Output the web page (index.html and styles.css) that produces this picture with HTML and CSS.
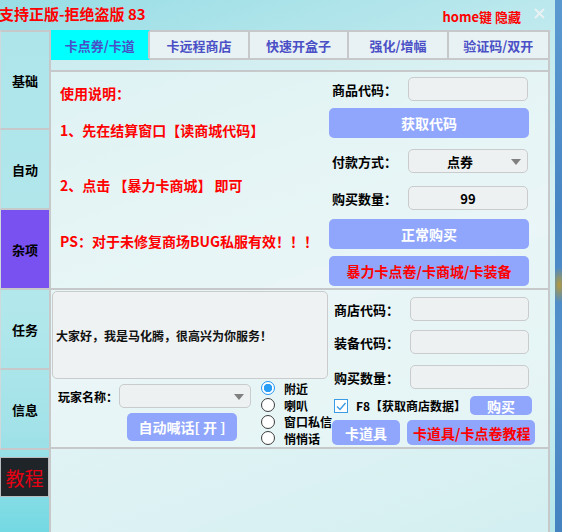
FILE: index.html
```html
<!DOCTYPE html>
<html lang="zh">
<head>
    <meta charset="UTF-8">
    <title>支持正版-拒绝盗版</title>
    <link rel="stylesheet" href="styles.css">
</head>
<body>
<div class="win">
    <div class="titlebar">
        <span class="title">支持正版-拒绝盗版 83</span>
        <span class="hide-tip">home键 隐藏</span>
        <span class="close">
            <svg width="11" height="11" viewBox="0 0 11 11"><path d="M1 1L10 10M10 1L1 10" stroke="#e9f1f3" stroke-width="2"/></svg>
        </span>
    </div>
    <div class="main">
        <div class="side">
            <div class="side-item first">基础</div>
            <div class="side-item">自动</div>
            <div class="side-item active">杂项</div>
            <div class="side-item">任务</div>
            <div class="side-item">信息</div>
            <div class="side-course">教程</div>
        </div>
        <div class="content">
            <div class="tabs">
                <div class="tab active">卡点券/卡道</div>
                <div class="tab">卡远程商店</div>
                <div class="tab">快速开盒子</div>
                <div class="tab">强化/增幅</div>
                <div class="tab last">验证码/双开</div>
            </div>

            <!-- 上半部分 -->
            <div class="panel upper">
                <div class="notes">
                    <p class="note head">使用说明：</p>
                    <p class="note step1">1、先在结算窗口【读商城代码】</p>
                    <p class="note step2">2、点击 【暴力卡商城】 即可</p>
                    <p class="note ps">PS：对于未修复商场BUG私服有效！！！</p>
                </div>
                <div class="form">
                    <div class="row r1">
                        <span class="label">商品代码：</span>
                        <div class="input"></div>
                    </div>
                    <div class="btn big b1">获取代码</div>
                    <div class="row r2">
                        <span class="label">付款方式：</span>
                        <div class="input select"><span class="val">点券</span><span class="arrow"></span></div>
                    </div>
                    <div class="row r3">
                        <span class="label">购买数量：</span>
                        <div class="input num">99</div>
                    </div>
                    <div class="btn big b2">正常购买</div>
                    <div class="btn big red b3">暴力卡点卷/卡商城/卡装备</div>
                </div>
            </div>

            <!-- 下半部分 -->
            <div class="panel lower">
                <div class="chat">
                    <div class="chat-box">大家好，我是马化腾，很高兴为你服务！</div>
                    <div class="chat-bottom">
                        <div class="name-block">
                            <div class="name-row">
                                <span class="label name-label">玩家名称：</span>
                                <div class="input select name-select"><span class="arrow"></span></div>
                            </div>
                            <div class="btn shout">自动喊话[ 开 ]</div>
                        </div>
                        <div class="radios">
                            <div class="radio-item"><span class="radio on"></span>附近</div>
                            <div class="radio-item"><span class="radio"></span>喇叭</div>
                            <div class="radio-item"><span class="radio"></span>窗口私信</div>
                            <div class="radio-item"><span class="radio"></span>悄悄话</div>
                        </div>
                    </div>
                </div>
                <div class="shop">
                    <div class="row s1">
                        <span class="label shop-label">商店代码：</span>
                        <div class="input shop-input"></div>
                    </div>
                    <div class="row s2">
                        <span class="label shop-label">装备代码：</span>
                        <div class="input shop-input"></div>
                    </div>
                    <div class="row s3">
                        <span class="label shop-label">购买数量：</span>
                        <div class="input shop-input"></div>
                    </div>
                    <div class="check-row">
                        <span class="checkbox">
                            <svg width="12" height="12" viewBox="0 0 12 12"><path d="M2 6.5L5 9.5L10.5 3" fill="none" stroke="#3a9be6" stroke-width="1.4"/></svg>
                        </span>
                        <span class="check-text">F8【获取商店数据】</span>
                        <div class="btn buy">购买</div>
                    </div>
                    <div class="btn-row">
                        <div class="btn prop">卡道具</div>
                        <div class="btn red course">卡道具/卡点卷教程</div>
                    </div>
                </div>
            </div>
        </div>
    </div>
</div>
<div class="desk"></div>
</body>
</html>
```

FILE: styles.css
```css
* { box-sizing: border-box; }

body {
    margin: 0;
    width: 562px;
    height: 532px;
    overflow: hidden;
    display: flex;
    font-family: "Noto Sans CJK SC", "Noto Sans", sans-serif;
    background: #4d8dc8;
}

p { margin: 0; }

.win {
    width: 555px;
    height: 532px;
    display: flex;
    flex-direction: column;
    background: linear-gradient(160deg, #98dde5 0%, #c4ebef 35%, #d6f0f2 55%, #c6ecef 80%, #b4e6eb 100%);
}

.desk {
    flex: 1;
    background:
        radial-gradient(ellipse 8px 18px at 60% 285px, #b59a3a, rgba(181, 154, 58, 0) 100%),
        linear-gradient(180deg, #5a99d0 0%, #4786c4 40%, #5592cc 70%, #4482c0 100%);
}

/* 标题栏 */
.titlebar {
    height: 30px;
    display: flex;
    align-items: flex-start;
    padding-right: 10px;
}
.title {
    margin: 4px 0 0 -1px;
    font-size: 15px;
    line-height: 20px;
    font-weight: bold;
    color: #ff0000;
}
.hide-tip {
    margin: 8px 0 0 auto;
    font-size: 13px;
    line-height: 18px;
    font-weight: bold;
    color: #ff0000;
}
.close {
    margin: 8px 0 0 13px;
    width: 11px;
    height: 11px;
    display: flex;
}

.main { flex: 1; display: flex; }

/* 左侧菜单 */
.side {
    width: 49px;
    display: flex;
    flex-direction: column;
    background: linear-gradient(180deg, #aee5ea 0%, #b2e8ec 55%, #a2e2e8 80%, #74d9e3 100%);
}
.side-item {
    height: 80px;
    display: flex;
    align-items: center;
    justify-content: center;
    border-left: 1px solid #cfd8da;
    border-bottom: 2px solid #c6c8c9;
    font-size: 13px;
    font-weight: bold;
    color: #000;
}
.side-item.first { height: 100px; border-top: 2px solid #c6c8c9; }
.side-item.active { background: #7951f1; }
.side-course {
    margin-top: 7px;
    height: 40px;
    width: 49px;
    display: flex;
    align-items: center;
    justify-content: center;
    background: #1f2429;
    border: 1px solid #b8bcbf;
    color: #e60012;
    font-size: 19px;
}

/* 右侧内容 */
.content {
    width: 501px;
    border-left: 2px solid #c6c8c9;
    border-right: 2px solid #c6c8c9;
    background: rgba(236, 245, 246, 0.55);
}
.tabs {
    height: 30px;
    display: grid;
    grid-template-columns: repeat(5, 1fr);
    margin-bottom: 10px;
}
.tab {
    display: flex;
    align-items: center;
    justify-content: center;
    border-top: 2px solid #c6c8c9;
    border-right: 2px solid #c6c8c9;
    border-bottom: 2px solid #c6c8c9;
    background: #e8f2f4;
    font-size: 13px;
    font-weight: bold;
    color: #4b50c6;
}
.tab.last { border-right: none; }
.tab.active {
    background: #00ffff;
    border-top-color: #00ffff;
    border-bottom-color: #00ffff;
}

.panel {
    display: flex;
    border-bottom: 2px solid #c6c8c9;
    background: rgba(240, 247, 248, 0.5);
}
.upper { height: 220px; border-top: 2px solid #c6c8c9; }
.lower { height: 159px; }

.notes { width: 278px; padding-left: 9px; }
.note {
    font-size: 14px;
    line-height: 20px;
    font-weight: bold;
    color: #ff0000;
}
.note.head { margin-top: 11px; }
.note.step1 { margin-top: 17px; }
.note.step2 { margin-top: 35px; }
.note.ps { margin-top: 36px; }

.form { width: 200px; display: flex; flex-direction: column; }
.row { display: flex; align-items: center; height: 24px; }
.label {
    font-size: 13px;
    font-weight: bold;
    color: #000;
    white-space: nowrap;
}
.form .label { width: 79px; padding-left: 3px; }
.input {
    width: 120px;
    height: 24px;
    border: 1px solid #c9cbcc;
    border-radius: 5px;
    background: #eef1f2;
}
.select { display: flex; align-items: center; position: relative; }
.select .val {
    flex: 1;
    text-align: center;
    padding-right: 16px;
    font-size: 13px;
    font-weight: bold;
}
.arrow {
    position: absolute;
    right: 6px;
    top: 9px;
    width: 0;
    height: 0;
    border-left: 5px solid transparent;
    border-right: 5px solid transparent;
    border-top: 6px solid #808080;
}
.num {
    display: flex;
    align-items: center;
    justify-content: center;
    font-size: 13px;
    font-weight: bold;
}

.btn {
    display: flex;
    align-items: center;
    justify-content: center;
    background: #8fa6fc;
    border-radius: 5px;
    color: #fff;
    font-size: 14px;
    font-weight: bold;
    white-space: nowrap;
}
.btn.red { color: #ff0000; }
.btn.big { height: 30px; }

.r1 { margin-top: 5px; }
.b1 { margin-top: 7px; }
.r2 { margin-top: 11px; }
.r3 { margin-top: 13px; }
.b2 { margin-top: 9px; }
.b3 { margin-top: 7px; }

/* 下半部分 */
.chat { width: 281px; }
.chat-box {
    margin: 1px 0 0 1px;
    width: 276px;
    height: 88px;
    display: flex;
    align-items: center;
    padding-left: 3px;
    border: 1px solid #c9cbcc;
    border-radius: 5px;
    background: #eff2f3;
    font-size: 12px;
    font-weight: bold;
    color: #111;
}
.chat-bottom { display: flex; }
.name-block { width: 210px; }
.name-row { display: flex; align-items: center; margin-top: 5px; }
.name-label { width: 68px; padding-left: 7px; font-size: 12px; flex-shrink: 0; }
.name-select { width: 132px; }
.btn.shout {
    margin: 5px 0 0 76px;
    width: 110px;
    height: 28px;
}

.radios { padding-top: 1px; }
.radio-item {
    height: 16.7px;
    display: flex;
    align-items: center;
    gap: 9px;
    font-size: 12px;
    font-weight: bold;
    color: #000;
    white-space: nowrap;
}
.radio {
    width: 14px;
    height: 14px;
    border: 1px solid #3c3c3c;
    border-radius: 50%;
    background: #fff;
}
.radio.on {
    border-color: #2196f3;
    background: radial-gradient(circle, #2a9df4 0 4px, #fff 4.5px);
}

.shop { width: 216px; padding-left: 2px; }
.shop-label { width: 76px; }
.shop-input { width: 119px; }
.s1 { margin-top: 7px; }
.s2 { margin-top: 9px; }
.s3 { margin-top: 11px; }

.check-row {
    margin-top: 7px;
    height: 19px;
    display: flex;
    align-items: center;
}
.checkbox {
    width: 14px;
    height: 14px;
    border: 1px solid #3a9be6;
    background: #fff;
    display: flex;
    align-items: center;
    justify-content: center;
}
.check-text {
    margin-left: 8px;
    font-size: 12px;
    font-weight: bold;
    color: #000;
}
.btn.buy {
    margin-left: 4px;
    width: 62px;
    height: 19px;
}

.btn-row { display: flex; margin-top: 5px; }
.btn.prop { width: 68px; height: 25px; margin-left: -2px; }
.btn.course {
    margin-left: 7px;
    width: 128px;
    height: 25px;
    justify-content: flex-start;
    padding-left: 6px;
}
```
